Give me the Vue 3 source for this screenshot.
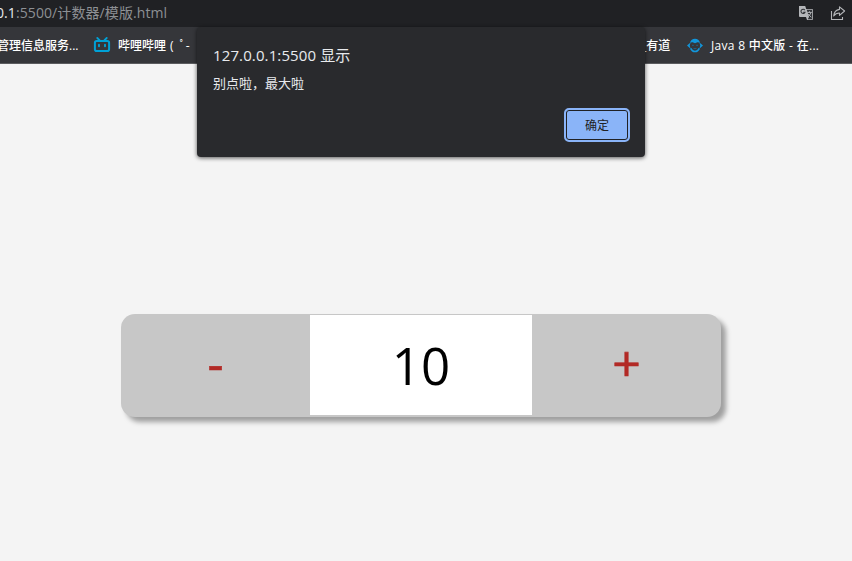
<script setup>
import { ref } from 'vue'

const count = ref(10)
const host = '127.0.0.1'
const port = ':5500'
</script>

<template>
  <div class="window">
    <header class="address-bar">
      <div class="url"><span class="host">0.1</span><span class="path">:5500/计数器/模版.html</span></div>
      <div class="actions">
        <svg class="translate" width="16" height="16" viewBox="0 0 16 16">
          <path d="M1 1h6.2l1 3H14a1 1 0 0 1 1 1v9a1 1 0 0 1-1 1H9l-1-3H2a1 1 0 0 1-1-1z" fill="#b4b6b9" />
          <path d="M8.700 4.800H14.200V14.200H9.800L11 12z" fill="#303236" />
          <path d="M6.800 5.100A2.100 2.100 0 1 0 7 7.200H5.200" fill="none" stroke="#303236" stroke-width="1.100" />
          <path d="M9.200 7.400h4.600M11.500 6.300v1.100M12.800 7.600c-.4 1.900-1.600 3.100-2.900 4M10.100 8.900l3.200 3.400" fill="none" stroke="#b4b6b9" />
        </svg>
        <svg class="share" width="16" height="16" viewBox="0 0 16 16">
          <path d="M1.500 6v8.500h11V12" fill="none" stroke="#b4b6b9" stroke-width="1.100" />
          <path d="M9.500 1.800 14.600 6 9.500 10.400V8C7 8 5.100 8.800 3.700 11c.3-3.300 2.200-6.100 5.800-6.600z" fill="none" stroke="#b4b6b9" stroke-width="1.100" stroke-linejoin="round" />
        </svg>
      </div>
    </header>

    <nav class="bookmarks">
      <span class="mark first">管理信息服务...</span>
      <svg class="tv" width="18" height="16" viewBox="0 0 18 16">
        <path d="M4.300 1l2.200 2.200M13.700 1l-2.200 2.200" stroke="#00a1d6" stroke-width="1.800" stroke-linecap="round" />
        <rect x="1.900" y="3.900" width="14.200" height="10.200" rx="1.800" fill="none" stroke="#00a1d6" stroke-width="2" />
        <path d="M6 7.800v1.400M12 7.800v1.400" stroke="#00a1d6" stroke-width="1.900" stroke-linecap="round" />
      </svg>
      <span class="mark second">哔哩哔哩<span class="face">( &nbsp;ﾟ-</span></span>
      <span class="mark third">_有道</span>
      <svg class="monkey" width="16" height="15" viewBox="0 0 16 15">
        <path d="M3 4.800C3.600 2 5.600.8 8 .8s4.400 1.200 5 4c-1.200-.6-2.300-.7-3.200-.3L8 5.200l-1.800-.7c-.9-.4-2-.3-3.200.3z" fill="#1296db" />
        <path d="M3.600 4.400 0 7.500l3.600 3.200-.9-3.200zM12.400 4.400 16 7.500l-3.600 3.200.9-3.200z" fill="#1296db" />
        <path d="M3.700 10.300c.9 2 2.400 3.200 4.300 3.200s3.400-1.200 4.300-3.200" fill="none" stroke="#1296db" stroke-width="1.600" />
        <path d="M5 7.300h1.800M9.200 7.300H11M6.500 10.600h3" stroke="#1a658c" />
      </svg>
      <span class="mark fourth">Java 8 中文版 - 在...</span>
    </nav>

    <main class="page">
      <div class="counter">
        <button class="step minus" @click="count--"><span>-</span></button>
        <div class="value">{{ count }}</div>
        <button class="step plus" @click="count < 10 && count++"><span>+</span></button>
      </div>
    </main>

    <section class="dialog" role="alertdialog">
      <h1>{{ host }}{{ port }} 显示</h1>
      <p>别点啦，最大啦</p>
      <div class="buttons"><button class="ok">确定</button></div>
    </section>
  </div>
</template>

<style>
body {
  margin: 0;
  background: #f4f4f4;
}
</style>

<style scoped>
.window {
  position: relative;
  display: flex;
  flex-direction: column;
  width: 852px;
  height: 561px;
  overflow: hidden;
  background: #f4f4f4;
  font-family: "Open Sans", "Noto Sans CJK SC", sans-serif;
}
button {
  font: inherit;
  border: 0;
  padding: 0;
}
.address-bar {
  display: flex;
  justify-content: space-between;
  height: 27px;
  background: #202124;
}
.url {
  margin-left: -4px;
  font-size: 14px;
  line-height: 26px;
  letter-spacing: 0.09px;
  white-space: nowrap;
  color: #8d9094;
}
.host {
  color: #e8eaed;
}
.actions {
  display: flex;
  gap: 16px;
  padding: 5px 6px 0 0;
}
.bookmarks {
  display: flex;
  box-sizing: border-box;
  height: 37px;
  background: #35363a;
  border-bottom: 1px solid #5b5c5f;
  padding-top: 9px;
}
.bookmarks svg {
  flex: none;
}
.mark {
  flex: none;
  padding-top: 1px;
  font-size: 12px;
  line-height: 18px;
  font-weight: 500;
  white-space: nowrap;
  color: #fff;
}
.first {
  width: 96px;
  margin-left: -3px;
}
.tv {
  margin-top: 1px;
}
.second {
  width: 523px;
  margin-left: 7px;
}
.face {
  margin-left: 4px;
}
.third {
  width: 46px;
}
.monkey {
  margin-top: 2px;
}
.fourth {
  margin-left: 8px;
  letter-spacing: 0.3px;
}
.page {
  display: flex;
  flex: 1;
  justify-content: center;
  align-items: flex-start;
  padding: 250px 10px 0 0;
}
.counter {
  display: grid;
  grid-template-columns: 189px 222px 189px;
  grid-template-rows: 100px;
  box-sizing: border-box;
  width: 600px;
  height: 103px;
  padding: 1px 0 2px;
  border-radius: 14px;
  background: #c7c7c7;
  box-shadow: 5px 5px 5px rgba(0, 0, 0, 0.35);
}
.value {
  background: #fff;
  color: #000;
  font-size: 51px;
  line-height: 101px;
  text-align: center;
  overflow: hidden;
}
.step {
  display: flex;
  justify-content: center;
  align-items: flex-start;
  background: transparent;
  color: #b22a26;
  font-size: 50px;
  line-height: 96px;
  -webkit-text-stroke: 0.6px #b22a26;
}
.dialog {
  position: absolute;
  top: 27px;
  left: 197px;
  box-sizing: border-box;
  width: 448px;
  height: 130px;
  padding: 17px 15px 15px 16px;
  border-radius: 4px;
  background: #292a2d;
  color: #e8eaed;
  box-shadow: 0 1px 4px rgba(0, 0, 0, 0.65);
}
h1 {
  margin: 0;
  font-size: 15px;
  font-weight: 400;
  line-height: 22px;
  letter-spacing: 0.12px;
}
p {
  margin: 6px 0 0;
  font-size: 13px;
  line-height: 22px;
}
.buttons {
  display: flex;
  justify-content: flex-end;
  margin-top: 14px;
}
.ok {
  box-sizing: border-box;
  width: 66px;
  height: 34px;
  border: 2px solid #8ab4f8;
  border-radius: 5px;
  background: #8ab4f8;
  box-shadow: inset 0 0 0 1px #202124;
  color: #202124;
  font-size: 12px;
  line-height: 31px;
}
</style>
